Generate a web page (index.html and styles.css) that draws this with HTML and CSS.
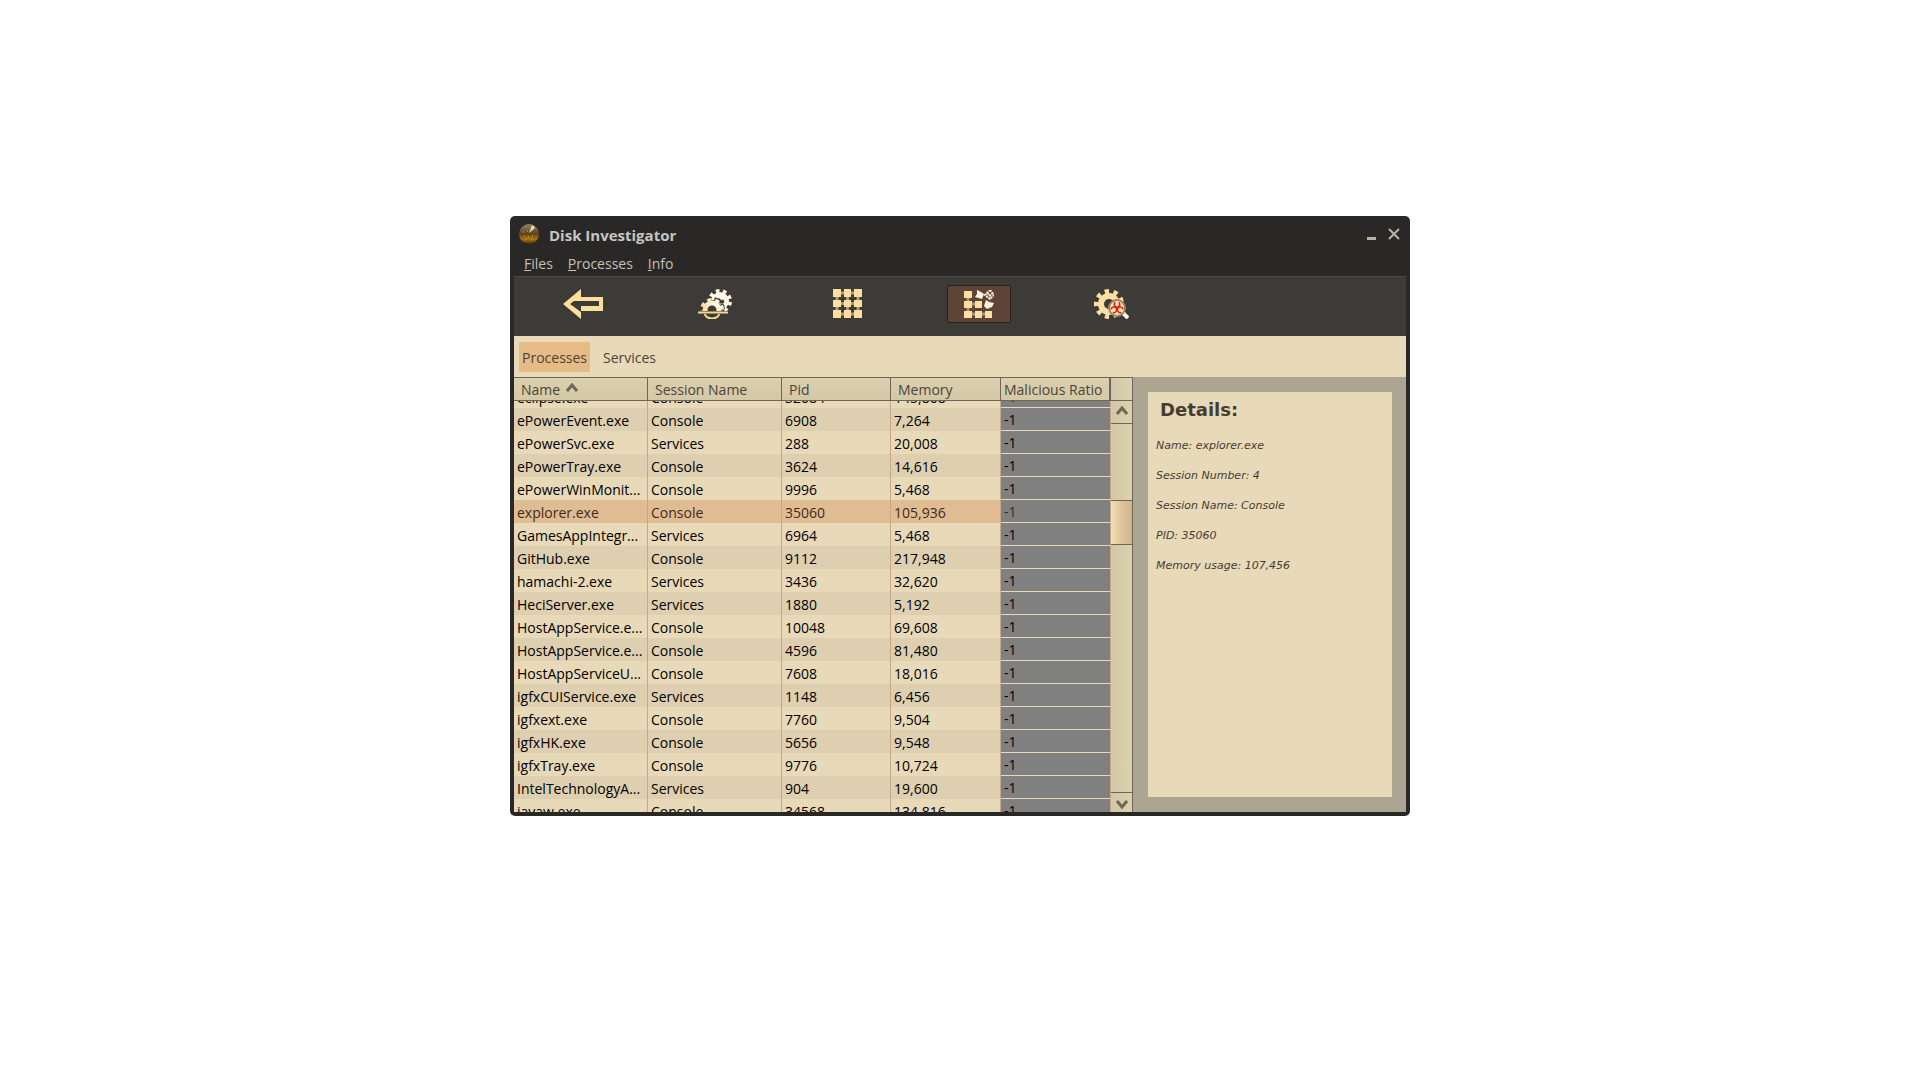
FILE: index.html
```html
<!DOCTYPE html>
<html lang="en">
<head>
<meta charset="utf-8">
<title>Disk Investigator</title>
<link rel="stylesheet" href="styles.css">
</head>
<body>
<main class="window">
  <header class="titlebar">
    <svg class="logo" viewBox="0 0 20 20" aria-hidden="true">
      <defs>
        <linearGradient id="orb" x1="0" y1="0" x2="0" y2="1">
          <stop offset="0" stop-color="#8d8468"/><stop offset=".5" stop-color="#5a431c"/><stop offset=".75" stop-color="#a87418"/><stop offset="1" stop-color="#4a2f08"/>
        </linearGradient>
      </defs>
      <circle cx="10" cy="10" r="10" fill="url(#orb)"/>
      <path d="M10 9L13 1a9 9 0 0 1 3 3Z" fill="#e6dcb4"/>
      <path d="M5 12h1M9 13h1M13 12h1M7 15h1M12 15h1M4 8h1M8 7h1" stroke="#e0a030"/>
    </svg>
    <h1 class="title">Disk Investigator</h1>
    <button class="winbtn" type="button" aria-label="Minimize"><svg viewBox="0 0 12 12"><path d="M2 10.500h9" stroke="#b5b5a2" stroke-width="3"/></svg></button>
    <button class="winbtn" type="button" aria-label="Close"><svg viewBox="0 0 12 12"><path d="M1 1L11 11M11 1L1 11" stroke="#b5b5a2" stroke-width="2"/></svg></button>
  </header>
  <nav class="menubar">
    <button type="button"><u>F</u>iles</button>
    <button type="button"><u>P</u>rocesses</button>
    <button type="button"><u>I</u>nfo</button>
  </nav>
  <div class="toolbar">
    <button class="tool" type="button" aria-label="Back">
      <svg width="40" height="30" viewBox="0 0 40 30"><path fill="#fddf9c" fill-rule="evenodd" d="M0 15L18 0V8H40V22H18V30ZM7 15L11 12H36V17H18V23Z"/></svg>
    </button>
    <button class="tool" type="button" aria-label="System processes">
      <svg width="34" height="30" viewBox="0 0 34 30">
        <defs>
          <linearGradient id="gearfill" gradientUnits="userSpaceOnUse" x1="22" y1="8" x2="4" y2="26"><stop offset=".2" stop-color="#fff8ea"/><stop offset="1" stop-color="#fbd692"/></linearGradient>
          <clipPath id="upper"><path d="M0 0H34V22H0Z"/></clipPath>
        </defs>
        <g clip-path="url(#upper)">
          <circle cx="22" cy="12" r="9" fill="#fff8ea"/>
          <circle cx="22" cy="12" r="10" fill="none" stroke="#fff6e4" stroke-width="4" stroke-dasharray="3.500 3.481" transform="rotate(5 22 12)"/>
          <path d="M20 10l3 3 3-1" fill="none" stroke="#3c3b37" stroke-width="3"/>
          <circle cx="14" cy="21" r="11" fill="none" stroke="#3c3b37" stroke-width="4" stroke-dasharray="5.500 3.100" transform="rotate(12 14 21)"/>
          <circle cx="14" cy="21" r="10" fill="#3c3b37"/>
          <circle cx="14" cy="21" r="7" fill="none" stroke="url(#gearfill)" stroke-width="5"/>
          <circle cx="14" cy="21" r="10" fill="none" stroke="url(#gearfill)" stroke-width="4" stroke-dasharray="4 3.854" transform="rotate(17 14 21)"/>
        </g>
        <path d="M0 23.500H30" stroke="#fbd692" stroke-width="2"/>
        <path d="M7 25a7 4.500 0 0 0 14 0" fill="none" stroke="#fbd692" stroke-width="2"/>
      </svg>
    </button>
    <button class="tool" type="button" aria-label="All blocks">
      <svg width="29" height="29" viewBox="0 0 29 29">
        <path d="M4 4H25V25H4ZM4 14.500H25M14.500 4V25" fill="none" stroke="#b39f76" stroke-width="3"/>
        <path fill="#fddfa4" d="M0 0h8v8H0ZM11 0h7v8h-7ZM21 0h8v8h-8ZM0 11h8v7H0ZM11 11h7v7h-7ZM21 11h8v7h-8ZM0 21h8v8H0ZM11 21h7v8h-7ZM21 21h8v8h-8Z"/>
      </svg>
    </button>
    <button class="tool tool-active" type="button" aria-label="Process list" aria-pressed="true">
      <svg width="30" height="28" viewBox="0 0 30 28">
        <path d="M4 4V24H24M4 14H14" fill="none" stroke="#b0946f" stroke-width="3"/>
        <path fill="#fddfa4" d="M0 1h8v7H0ZM0 11h8v7H0ZM11 11h7v7h-7ZM0 21h8v7H0ZM11 21h7v7h-7ZM21 21h7v7h-7Z"/>
        <path fill="#fff3dc" d="M13 0L17 2 20 4 18 9 11 7 13 4ZM22 10L25 12 30 13 28 17 23 19 20 16Z"/>
        <path fill="none" stroke="#fff3dc" stroke-width="2" stroke-dasharray="2 1" d="M26 0L30 5 26 9 21 5ZM23 3L28 7M29 3L23 7"/>
      </svg>
    </button>
    <button class="tool" type="button" aria-label="Scan for malware">
      <svg width="35" height="30" viewBox="0 0 35 30">
        <circle cx="15" cy="15" r="8" fill="none" stroke="#fddfa4" stroke-width="6"/>
        <circle cx="15" cy="15" r="12" fill="none" stroke="#fddfa4" stroke-width="6" stroke-dasharray="4 4.378" transform="rotate(9 15 15)"/>
        <path d="M29 24L34 29" stroke="#fff6e8" stroke-width="4"/>
        <circle cx="23" cy="19" r="8" fill="#fbe3b4" stroke="#9a8463" stroke-width="2"/>
        <g fill="none" stroke="#f3130d" stroke-width="1.500">
          <path d="M21.200 13.200a2.800 2.800 0 1 0 3.600 0"/>
          <path d="M21.200 13.200a2.800 2.800 0 1 0 3.600 0" transform="rotate(120 23 19)"/>
          <path d="M21.200 13.200a2.800 2.800 0 1 0 3.600 0" transform="rotate(240 23 19)"/>
        </g>
      </svg>
    </button>
  </div>
  <div class="tabs" role="tablist">
    <button class="tab tab-active" type="button" role="tab" aria-selected="true">Processes</button>
    <button class="tab" type="button" role="tab" aria-selected="false">Services</button>
  </div>
  <div class="content">
    <div class="list" id="list">
      <table class="grid">
        <colgroup><col class="c-name"><col class="c-session"><col class="c-pid"><col class="c-memory"><col class="c-ratio"></colgroup>
        <thead><tr>
          <th scope="col">Name <svg class="sort" viewBox="0 0 12 9" aria-hidden="true"><path d="M1 8L6 2L11 8" fill="none" stroke="#6f6858" stroke-width="3"/></svg></th>
          <th scope="col">Session Name</th><th scope="col">Pid</th><th scope="col">Memory</th><th scope="col">Malicious Ratio</th>
        </tr></thead>
        <tbody>
          <tr><td>eclipse.exe</td><td>Console</td><td>32084</td><td>145,808</td><td>-1</td></tr>
          <tr><td>ePowerEvent.exe</td><td>Console</td><td>6908</td><td>7,264</td><td>-1</td></tr>
          <tr><td>ePowerSvc.exe</td><td>Services</td><td>288</td><td>20,008</td><td>-1</td></tr>
          <tr><td>ePowerTray.exe</td><td>Console</td><td>3624</td><td>14,616</td><td>-1</td></tr>
          <tr><td>ePowerWinMonit...</td><td>Console</td><td>9996</td><td>5,468</td><td>-1</td></tr>
          <tr class="selected"><td>explorer.exe</td><td>Console</td><td>35060</td><td>105,936</td><td>-1</td></tr>
          <tr><td>GamesAppIntegr...</td><td>Services</td><td>6964</td><td>5,468</td><td>-1</td></tr>
          <tr><td>GitHub.exe</td><td>Console</td><td>9112</td><td>217,948</td><td>-1</td></tr>
          <tr><td>hamachi-2.exe</td><td>Services</td><td>3436</td><td>32,620</td><td>-1</td></tr>
          <tr><td>HeciServer.exe</td><td>Services</td><td>1880</td><td>5,192</td><td>-1</td></tr>
          <tr><td>HostAppService.e...</td><td>Console</td><td>10048</td><td>69,608</td><td>-1</td></tr>
          <tr><td>HostAppService.e...</td><td>Console</td><td>4596</td><td>81,480</td><td>-1</td></tr>
          <tr><td>HostAppServiceU...</td><td>Console</td><td>7608</td><td>18,016</td><td>-1</td></tr>
          <tr><td>igfxCUIService.exe</td><td>Services</td><td>1148</td><td>6,456</td><td>-1</td></tr>
          <tr><td>igfxext.exe</td><td>Console</td><td>7760</td><td>9,504</td><td>-1</td></tr>
          <tr><td>igfxHK.exe</td><td>Console</td><td>5656</td><td>9,548</td><td>-1</td></tr>
          <tr><td>igfxTray.exe</td><td>Console</td><td>9776</td><td>10,724</td><td>-1</td></tr>
          <tr><td>IntelTechnologyA...</td><td>Services</td><td>904</td><td>19,600</td><td>-1</td></tr>
          <tr><td>javaw.exe</td><td>Console</td><td>34568</td><td>134,816</td><td>-1</td></tr>
        </tbody>
      </table>
    </div>
    <div class="scrollbar">
      <div class="corner"></div>
      <button class="step" type="button" aria-label="Scroll up"><svg viewBox="0 0 12 9"><path d="M1 8L6 2L11 8" fill="none" stroke="#6f6858" stroke-width="3"/></svg></button>
      <div class="track"><div class="thumb"></div></div>
      <button class="step step-down" type="button" aria-label="Scroll down"><svg viewBox="0 0 12 9"><path d="M1 1L6 7L11 1" fill="none" stroke="#6f6858" stroke-width="3"/></svg></button>
    </div>
    <aside class="side">
      <section class="details">
        <h2>Details:</h2>
        <p>Name: explorer.exe</p>
        <p>Session Number: 4</p>
        <p>Session Name: Console</p>
        <p>PID: 35060</p>
        <p>Memory usage: 107,456</p>
      </section>
    </aside>
  </div>
</main>
<script src="app.js"></script>
</body>
</html>
```
FILE: styles.css
```css
* { box-sizing: border-box; }
body {
  margin: 0;
  background: #fff;
  font: 14px/20px "Open Sans", "Noto Sans", sans-serif;
  color: #000;
}
button {
  margin: 0;
  padding: 0;
  border: 0;
  background: none;
  font: inherit;
  color: inherit;
}
svg { display: block; }

.window {
  display: flex;
  flex-direction: column;
  max-width: 900px;
  height: 600px;
  margin: 20vh auto 0;
  padding: 0 4px 4px;
  overflow: hidden;
  border-radius: 5px;
  background: #292827;
}
.titlebar {
  display: flex;
  align-items: center;
  height: 36px;
  padding: 0 4px 0 5px;
}
.logo { width: 20px; height: 20px; }
.title {
  flex: 1;
  margin: 0 0 0 10px;
  padding-top: 2px;
  font: bold 15px/20px "Open Sans", "Noto Sans", sans-serif;
  color: #c6c5c1;
}
.winbtn { padding: 0 2px; margin-left: 7px; }
.winbtn svg { width: 12px; height: 12px; }
.menubar {
  display: flex;
  gap: 15px;
  height: 24px;
  padding: 0 10px;
  color: #c4c1b8;
}
.toolbar {
  display: flex;
  flex: none;
  align-items: center;
  gap: 68px;
  height: 60px;
  padding: 0 38px 6px 37px;
  border-top: 1px solid #4b4a47;
  background: #3c3b37;
}
.tool {
  display: flex;
  align-items: center;
  justify-content: center;
  width: 64px;
  height: 38px;
  border: 1px solid transparent;
  border-radius: 2px;
}
.tool-active { background: #5e4437; border-color: #271f1b; }
.tabs {
  display: flex;
  flex: none;
  align-items: center;
  gap: 10px;
  height: 41px;
  padding: 0 5px;
  background: #e8d9b8;
  color: #4c4438;
}
.tab { height: 30px; padding: 2px 3px 0; }
.tab-active { background: #e6bb86; }

.content { display: flex; flex: 1; min-height: 0; background: #aca591; }
.list {
  flex: none;
  width: 597px;
  overflow: auto;
  scrollbar-width: none;
  background: #e8d9b8;
}
.grid { width: 100%; table-layout: fixed; border-spacing: 0; }
.c-name, .c-session { width: 134px; }
.c-pid { width: 109px; }
.c-memory, .c-ratio { width: 110px; }
th, td { padding: 2px 3px 0; text-align: left; white-space: nowrap; overflow: hidden; }
th {
  position: sticky;
  top: 0;
  height: 24px;
  padding-left: 7px;
  border: solid #6e6656;
  border-width: 1px 1px 1px 0;
  background: linear-gradient(#dbcfae, #d3c9a6);
  color: #4c4438;
  font-weight: normal;
}
th:last-child { padding: 2px 0 0 3px; border-right-width: 2px; }
.sort { display: inline-block; width: 12px; height: 9px; margin: 0 0 3px 2px; }
td {
  height: 23px;
  border-right: 1px solid #c9a68a;
}
td:last-child { padding-top: 1px; border-bottom: 1px solid #e8d9b8; }
tr:nth-child(even) td { background: #decfb0; }
.grid .selected td { background: #dfbc92; color: #3d2b1a; }
.grid tr td:last-child { background: #808080; }

.scrollbar {
  display: flex;
  flex-direction: column;
  flex: none;
  width: 22px;
  border-right: 1px solid #6e6656;
  background: linear-gradient(90deg, #d2c7a6, #ddd1af);
}
.corner { height: 24px; border: solid #6e6656; border-width: 1px 0; }
.step {
  display: flex;
  align-items: center;
  justify-content: center;
  height: 23px;
  padding-bottom: 4px;
  border-bottom: 1px solid #6e6656;
}
.step svg { width: 12px; height: 9px; }
.step-down { height: 20px; padding: 3px 0 0; border-top: 1px solid #6e6656; border-bottom: 0; }
.track { flex: 1; padding-top: 76px; }
.thumb {
  height: 45px;
  border: solid #6e6656;
  border-width: 1px 0;
  background: linear-gradient(90deg, #f2dfb5, #dfc59b 50%, #d3b489);
}
.side { display: flex; flex: 1; padding: 15px 14px 15px 15px; }
.details {
  flex: 1;
  padding: 5px 8px;
  background: #e8d9b8;
  color: #463d32;
  font: italic 11px/14px "DejaVu Sans", sans-serif;
}
.details h2 { margin: 0 0 16px 4px; font: bold 18px/26px "DejaVu Sans", sans-serif; }
.details p { margin: 0 0 16px; }
```
FILE: app.js
```js
document.getElementById("list").scrollTop = 16;
```
